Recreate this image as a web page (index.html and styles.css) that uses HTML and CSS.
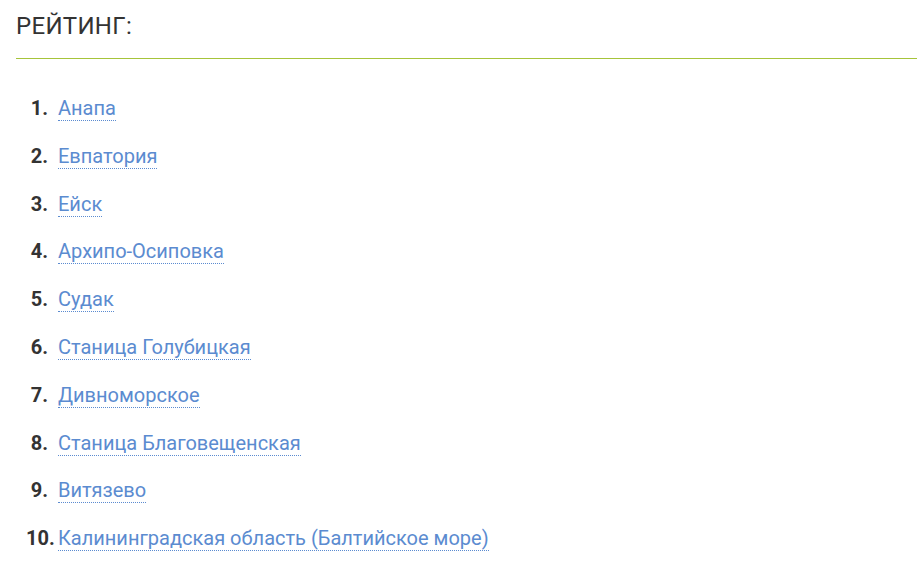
FILE: index.html
```html
<!DOCTYPE html>
<html lang="ru">
<head>
<meta charset="utf-8">
<link rel="stylesheet" href="styles.css">
</head>
<body>
<div class="page">
  <h2 class="title">РЕЙТИНГ:</h2>
  <div class="rule"></div>
  <ol class="rating">
    <li><a href="#">Анапа</a></li>
    <li><a href="#">Евпатория</a></li>
    <li><a href="#">Ейск</a></li>
    <li><a href="#">Архипо-Осиповка</a></li>
    <li><a href="#">Судак</a></li>
    <li><a href="#">Станица Голубицкая</a></li>
    <li><a href="#">Дивноморское</a></li>
    <li><a href="#">Станица Благовещенская</a></li>
    <li><a href="#">Витязево</a></li>
    <li><a href="#">Калининградская область (Балтийское море)</a></li>
  </ol>
</div>
</body>
</html>
```
FILE: styles.css
```css
html, body {
  margin: 0;
  padding: 0;
  background: #fff;
}
body {
  font-family: Roboto, "Liberation Sans", sans-serif;
  color: #333;
}
.page {
  padding: 12px 0 0 16px;
}
.title {
  margin: 0;
  font-size: 24px;
  font-weight: 400;
  letter-spacing: 0.3px;
  line-height: 29px;
  padding-bottom: 17px;
  color: #333;
}
.rule {
  height: 1px;
  background: #a6c43a;
}
.rating {
  list-style: none;
  margin: 35px 0 0 0;
  padding: 0;
  counter-reset: item;
}
.rating li {
  counter-increment: item;
  font-size: 20px;
  line-height: 28px;
  height: 28px;
  margin-bottom: 19.8px;
  white-space: nowrap;
}
.rating li::before {
  content: counter(item) ".";
  display: inline-block;
  width: 22px;
  margin-left: 10px;
  margin-right: 10px;
  text-align: right;
  font-weight: 700;
  color: #333;
}
.rating a {
  color: #5b8bd0;
  text-decoration: none;
  border-bottom: 1px dotted #5b8bd0;
}
```
